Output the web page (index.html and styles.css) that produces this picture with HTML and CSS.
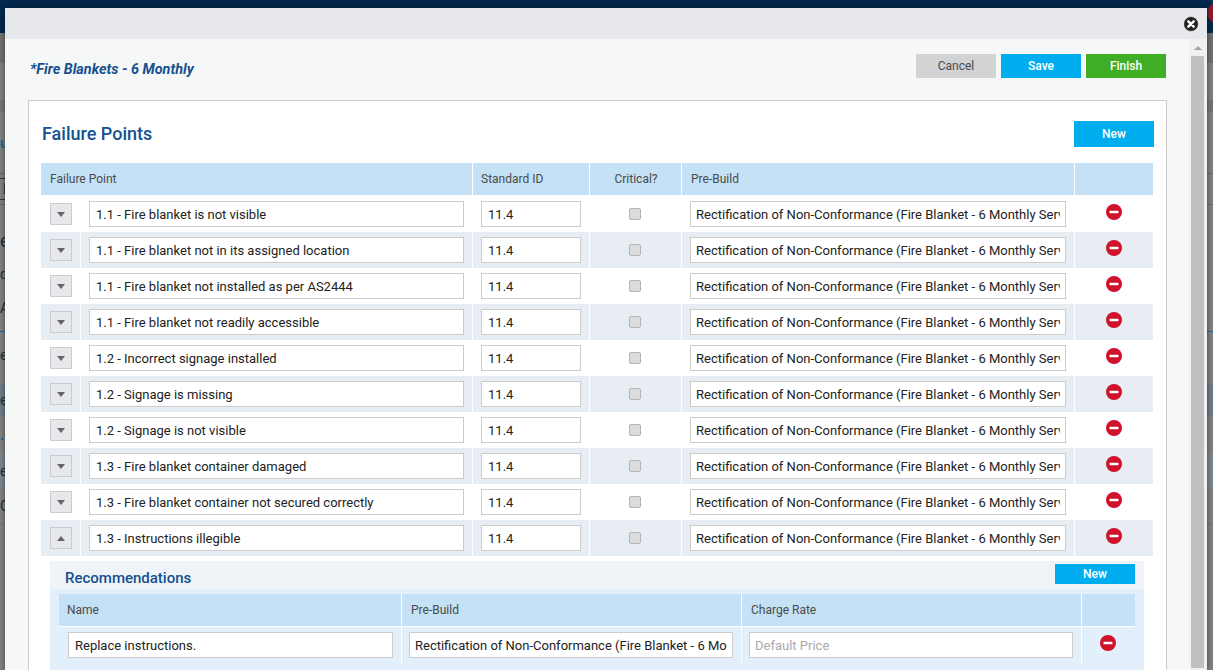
FILE: index.html
```html
<!DOCTYPE html>
<html lang="en">
<head>
    <meta charset="UTF-8">
    <meta name="viewport" content="width=device-width, initial-scale=1.0">
    <title>Fire Blankets - 6 Monthly</title>
    <link rel="stylesheet" href="styles.css">
</head>
<body>
    <!-- page behind the dialog, dimmed -->
    <div class="backdrop">
        <div class="nav"><span class="avatar"></span></div>
        <div class="band band-a"></div>
        <div class="band band-b"></div>
        <div class="band band-c"></div>
        <div class="band band-d"><span class="link">u</span></div>
        <div class="band band-e"><span class="boxed">D</span></div>
        <div class="band band-f">e</div>
        <div class="band band-g">di</div>
        <div class="band band-h">A</div>
        <div class="band band-i">e</div>
        <div class="band band-j">e</div>
        <div class="band band-k"><span class="link">.</span></div>
        <div class="band band-l">e</div>
        <div class="band band-m">Q</div>
        <div class="band band-n"></div>
    </div>

    <div class="modal">
        <div class="modal-head">
            <svg class="close-icon" viewBox="0 0 16 16" width="16" height="16">
                <circle cx="8" cy="8" r="7.4" fill="#222" stroke="#fff" stroke-width="0.6"/>
                <path d="M5.3 5.3l5.4 5.4M10.7 5.3l-5.4 5.4" stroke="#fff" stroke-width="2.4" stroke-linecap="round"/>
            </svg>
        </div>
        <div class="modal-body">
            <div class="content">
                <div class="title-row">
                    <div class="form-title">*Fire Blankets - 6 Monthly</div>
                    <div class="actions">
                        <button class="btn btn-grey">Cancel</button>
                        <button class="btn btn-blue">Save</button>
                        <button class="btn btn-green">Finish</button>
                    </div>
                </div>

                <div class="card">
                    <div class="card-head">
                        <h2>Failure Points</h2>
                        <button class="btn btn-blue btn-new">New</button>
                    </div>
                    <table class="grid">
                        <colgroup>
                            <col class="c-toggle"><col class="c-name"><col class="c-std"><col class="c-crit"><col class="c-pre"><col class="c-del">
                        </colgroup>
                        <thead>
                            <tr>
                                <th colspan="2">Failure Point</th>
                                <th class="std">Standard ID</th>
                                <th class="center">Critical?</th>
                                <th>Pre-Build</th>
                                <th></th>
                            </tr>
                        </thead>
                        <tbody>
                            <tr>
                                <td><span class="toggle"><i class="down"></i></span></td>
                                <td><input class="field" type="text" value="1.1 - Fire blanket is not visible"></td>
                                <td><input class="field" type="text" value="11.4"></td>
                                <td><input class="check" type="checkbox"></td>
                                <td><input class="field field-pre" type="text" value="Rectification of Non-Conformance (Fire Blanket - 6 Monthly Service)"></td>
                                <td><svg class="remove" viewBox="0 0 16 16" width="16" height="16"><circle cx="8" cy="8" r="8" fill="#d0122d"/><rect x="3.5" y="6.8" width="9" height="2.4" rx="0.6" fill="#fff"/></svg></td>
                            </tr>
                            <tr class="alt">
                                <td><span class="toggle"><i class="down"></i></span></td>
                                <td><input class="field" type="text" value="1.1 - Fire blanket not in its assigned location"></td>
                                <td><input class="field" type="text" value="11.4"></td>
                                <td><input class="check" type="checkbox"></td>
                                <td><input class="field field-pre" type="text" value="Rectification of Non-Conformance (Fire Blanket - 6 Monthly Service)"></td>
                                <td><svg class="remove" viewBox="0 0 16 16" width="16" height="16"><circle cx="8" cy="8" r="8" fill="#d0122d"/><rect x="3.5" y="6.8" width="9" height="2.4" rx="0.6" fill="#fff"/></svg></td>
                            </tr>
                            <tr>
                                <td><span class="toggle"><i class="down"></i></span></td>
                                <td><input class="field" type="text" value="1.1 - Fire blanket not installed as per AS2444"></td>
                                <td><input class="field" type="text" value="11.4"></td>
                                <td><input class="check" type="checkbox"></td>
                                <td><input class="field field-pre" type="text" value="Rectification of Non-Conformance (Fire Blanket - 6 Monthly Service)"></td>
                                <td><svg class="remove" viewBox="0 0 16 16" width="16" height="16"><circle cx="8" cy="8" r="8" fill="#d0122d"/><rect x="3.5" y="6.8" width="9" height="2.4" rx="0.6" fill="#fff"/></svg></td>
                            </tr>
                            <tr class="alt">
                                <td><span class="toggle"><i class="down"></i></span></td>
                                <td><input class="field" type="text" value="1.1 - Fire blanket not readily accessible"></td>
                                <td><input class="field" type="text" value="11.4"></td>
                                <td><input class="check" type="checkbox"></td>
                                <td><input class="field field-pre" type="text" value="Rectification of Non-Conformance (Fire Blanket - 6 Monthly Service)"></td>
                                <td><svg class="remove" viewBox="0 0 16 16" width="16" height="16"><circle cx="8" cy="8" r="8" fill="#d0122d"/><rect x="3.5" y="6.8" width="9" height="2.4" rx="0.6" fill="#fff"/></svg></td>
                            </tr>
                            <tr>
                                <td><span class="toggle"><i class="down"></i></span></td>
                                <td><input class="field" type="text" value="1.2 - Incorrect signage installed"></td>
                                <td><input class="field" type="text" value="11.4"></td>
                                <td><input class="check" type="checkbox"></td>
                                <td><input class="field field-pre" type="text" value="Rectification of Non-Conformance (Fire Blanket - 6 Monthly Service)"></td>
                                <td><svg class="remove" viewBox="0 0 16 16" width="16" height="16"><circle cx="8" cy="8" r="8" fill="#d0122d"/><rect x="3.5" y="6.8" width="9" height="2.4" rx="0.6" fill="#fff"/></svg></td>
                            </tr>
                            <tr class="alt">
                                <td><span class="toggle"><i class="down"></i></span></td>
                                <td><input class="field" type="text" value="1.2 - Signage is missing"></td>
                                <td><input class="field" type="text" value="11.4"></td>
                                <td><input class="check" type="checkbox"></td>
                                <td><input class="field field-pre" type="text" value="Rectification of Non-Conformance (Fire Blanket - 6 Monthly Service)"></td>
                                <td><svg class="remove" viewBox="0 0 16 16" width="16" height="16"><circle cx="8" cy="8" r="8" fill="#d0122d"/><rect x="3.5" y="6.8" width="9" height="2.4" rx="0.6" fill="#fff"/></svg></td>
                            </tr>
                            <tr>
                                <td><span class="toggle"><i class="down"></i></span></td>
                                <td><input class="field" type="text" value="1.2 - Signage is not visible"></td>
                                <td><input class="field" type="text" value="11.4"></td>
                                <td><input class="check" type="checkbox"></td>
                                <td><input class="field field-pre" type="text" value="Rectification of Non-Conformance (Fire Blanket - 6 Monthly Service)"></td>
                                <td><svg class="remove" viewBox="0 0 16 16" width="16" height="16"><circle cx="8" cy="8" r="8" fill="#d0122d"/><rect x="3.5" y="6.8" width="9" height="2.4" rx="0.6" fill="#fff"/></svg></td>
                            </tr>
                            <tr class="alt">
                                <td><span class="toggle"><i class="down"></i></span></td>
                                <td><input class="field" type="text" value="1.3 - Fire blanket container damaged"></td>
                                <td><input class="field" type="text" value="11.4"></td>
                                <td><input class="check" type="checkbox"></td>
                                <td><input class="field field-pre" type="text" value="Rectification of Non-Conformance (Fire Blanket - 6 Monthly Service)"></td>
                                <td><svg class="remove" viewBox="0 0 16 16" width="16" height="16"><circle cx="8" cy="8" r="8" fill="#d0122d"/><rect x="3.5" y="6.8" width="9" height="2.4" rx="0.6" fill="#fff"/></svg></td>
                            </tr>
                            <tr>
                                <td><span class="toggle"><i class="down"></i></span></td>
                                <td><input class="field" type="text" value="1.3 - Fire blanket container not secured correctly"></td>
                                <td><input class="field" type="text" value="11.4"></td>
                                <td><input class="check" type="checkbox"></td>
                                <td><input class="field field-pre" type="text" value="Rectification of Non-Conformance (Fire Blanket - 6 Monthly Service)"></td>
                                <td><svg class="remove" viewBox="0 0 16 16" width="16" height="16"><circle cx="8" cy="8" r="8" fill="#d0122d"/><rect x="3.5" y="6.8" width="9" height="2.4" rx="0.6" fill="#fff"/></svg></td>
                            </tr>
                            <tr class="alt">
                                <td><span class="toggle"><i class="up"></i></span></td>
                                <td><input class="field" type="text" value="1.3 - Instructions illegible"></td>
                                <td><input class="field" type="text" value="11.4"></td>
                                <td><input class="check" type="checkbox"></td>
                                <td><input class="field field-pre" type="text" value="Rectification of Non-Conformance (Fire Blanket - 6 Monthly Service)"></td>
                                <td><svg class="remove" viewBox="0 0 16 16" width="16" height="16"><circle cx="8" cy="8" r="8" fill="#d0122d"/><rect x="3.5" y="6.8" width="9" height="2.4" rx="0.6" fill="#fff"/></svg></td>
                            </tr>
                            <tr class="detail">
                                <td colspan="6">
                                    <div class="panel">
                                        <div class="panel-head">
                                            <h3>Recommendations</h3>
                                            <button class="btn btn-blue btn-small">New</button>
                                        </div>
                                        <div class="panel-body">
                                            <table class="grid inner">
                                                <colgroup>
                                                    <col class="r-name"><col class="r-pre"><col class="r-rate"><col class="r-del">
                                                </colgroup>
                                                <thead>
                                                    <tr>
                                                        <th>Name</th>
                                                        <th>Pre-Build</th>
                                                        <th>Charge Rate</th>
                                                        <th></th>
                                                    </tr>
                                                </thead>
                                                <tbody>
                                                    <tr>
                                                        <td><input class="field" type="text" value="Replace instructions."></td>
                                                        <td><input class="field field-pre" type="text" value="Rectification of Non-Conformance (Fire Blanket - 6 Monthly Service)"></td>
                                                        <td><input class="field field-pre" type="text" placeholder="Default Price"></td>
                                                        <td><svg class="remove" viewBox="0 0 16 16" width="16" height="16"><circle cx="8" cy="8" r="8" fill="#d0122d"/><rect x="3.5" y="6.8" width="9" height="2.4" rx="0.6" fill="#fff"/></svg></td>
                                                    </tr>
                                                </tbody>
                                            </table>
                                        </div>
                                    </div>
                                </td>
                            </tr>
                        </tbody>
                    </table>
                </div>
            </div>
            <div class="scrollbar">
                <i class="scroll-up"></i>
                <div class="scroll-thumb"></div>
            </div>
        </div>
    </div>
</body>
</html>
```
FILE: styles.css
```css
* {
    box-sizing: border-box;
}
html, body {
    height: 670px;
    overflow: hidden;
}
body {
    margin: 0;
    font-family: Roboto, "Liberation Sans", sans-serif;
    background-color: #7f7f7f;
}

/* page behind the dialog */
.backdrop {
    display: flex;
    flex-direction: column;
    font-size: 14px;
    color: #1c2c40;
}
.nav {
    position: relative;
    height: 33px;
    background-color: #02294d;
    overflow: hidden;
}
.avatar {
    position: absolute;
    top: 3px;
    right: -14px;
    width: 20px;
    height: 20px;
    border-radius: 50%;
    background-color: #8a1c2c;
}
.band {
    display: flex;
    align-items: center;
    overflow: hidden;
}
.band-a { height: 30px; background-color: #6f6f6f; }
.band-b { height: 37px; }
.band-c { height: 12px; background-color: #737373; }
.band-d { height: 62px; border-bottom: 1px solid #666; }
.band-e { height: 31px; border-bottom: 1px solid #666; }
.band-f { height: 50px; font-size: 18px; padding-top: 20px; }
.band-g { height: 34px; padding-top: 4px; }
.band-h { height: 43px; padding-bottom: 4px; border-bottom: 1px solid #0d6d99; }
.band-i { height: 52px; padding-bottom: 6px; }
.band-j { height: 32px; background-color: #6a7a88; }
.band-k { height: 37px; }
.band-l { height: 35px; background-color: #7a8590; }
.band-m { height: 37px; border-bottom: 1px solid #707070; }
.band-n { height: 145px; }
.link {
    color: #0d6d99;
    font-weight: 700;
}
.boxed {
    border: 1px solid #333;
    padding: 2px 1px 2px 4px;
    margin-left: -2px;
}

/* dialog */
.modal {
    position: absolute;
    top: 8px;
    left: 5px;
    width: 1202px;
    height: 662px;
    background-color: #f6f8f8;
    box-shadow: 0 0 5px rgba(0, 0, 0, 0.45);
}
.modal-head {
    position: relative;
    height: 31px;
    background-color: #e6e8ec;
}
.close-icon {
    position: absolute;
    top: 8px;
    right: 8px;
}
.modal-body {
    display: flex;
    height: 631px;
    overflow: hidden;
}
.content {
    flex: 1;
    padding: 15px 22px 0 23px;
    overflow: hidden;
}
.scrollbar {
    display: flex;
    flex-direction: column;
    align-items: center;
    width: 18px;
    padding-right: 1px;
    background-color: #f1f1f1;
}
.scroll-up {
    margin-top: 7px;
    border-left: 4px solid transparent;
    border-right: 4px solid transparent;
    border-bottom: 4px solid #a3a3a3;
}
.scroll-thumb {
    width: 13px;
    height: 612px;
    margin-top: 6px;
    background-color: #c0c0c0;
}
.title-row {
    display: flex;
    justify-content: space-between;
    margin-bottom: 22px;
}
.form-title {
    margin: 7px 0 0 2px;
    font-size: 14.4px;
    font-weight: 700;
    font-style: italic;
    color: #15508f;
}
.actions {
    display: flex;
    gap: 5px;
    margin-right: 1px;
}
.btn {
    width: 80px;
    height: 24px;
    padding: 0;
    border: none;
    font-family: Roboto, "Liberation Sans", sans-serif;
    font-size: 12px;
    font-weight: 500;
    color: #fff;
    cursor: pointer;
}
.btn-grey {
    background-color: #d1d3d5;
    color: #4a4a4a;
    font-weight: 400;
}
.btn-blue {
    background-color: #00aeef;
}
.btn-green {
    background-color: #3fae24;
}
.btn-new {
    height: 26px;
}
.btn-small {
    height: 20px;
}

/* failure points card */
.card {
    width: 1139px;
    padding: 20px 12px 12px;
    background: #fff;
    border: 1px solid #ccc;
}
.card-head {
    display: flex;
    justify-content: space-between;
    margin-bottom: 16px;
}
.card-head h2 {
    margin: 0 0 0 1px;
    font-size: 18px;
    line-height: 25px;
    font-weight: 500;
    color: #15508f;
}

/* tables */
.grid {
    width: 1112px;
    table-layout: fixed;
    border-collapse: separate;
    border-spacing: 0;
}
.c-toggle { width: 39px; }
.c-name { width: 392px; }
.c-std { width: 117px; }
.c-crit { width: 92px; }
.c-pre { width: 393px; }
.c-del { width: 79px; }
.grid th {
    height: 33px;
    padding: 0 8px 1px 9px;
    background-color: #c5e1f5;
    border-left: 1px solid #fff;
    border-bottom: 1px solid #fff;
    font-size: 12px;
    font-weight: 400;
    text-align: left;
    color: #4a4a4a;
}
.grid th:first-child {
    border-left: none;
}
.grid th.std {
    padding-left: 8px;
}
.grid td {
    height: 36px;
    padding: 5px 8px;
    border-left: 1px solid #fff;
    vertical-align: top;
}
.grid td:first-child {
    border-left: none;
}
.grid .center {
    text-align: center;
}
.grid tr.alt td {
    background-color: #e8edf4;
}
.field {
    display: block;
    width: 100%;
    height: 26px;
    padding: 0 6px;
    background: #fff;
    border: 1px solid #ccc;
    font-family: Roboto, "Liberation Sans", sans-serif;
    font-size: 13px;
    color: #222;
    outline: none;
}
.field-pre {
    padding: 0 5px;
}
.field::placeholder {
    color: #aaa;
}
.toggle {
    display: flex;
    align-items: center;
    justify-content: center;
    width: 22px;
    height: 22px;
    margin: 2px 0 0 1px;
    background-color: #e6e8ec;
    border: 1px solid #ccc;
}
.down {
    border-left: 4px solid transparent;
    border-right: 4px solid transparent;
    border-top: 5px solid #666;
}
.up {
    border-left: 4px solid transparent;
    border-right: 4px solid transparent;
    border-bottom: 5px solid #666;
}
.check {
    appearance: none;
    display: block;
    width: 12px;
    height: 12px;
    margin: 7px 0 0 31px;
    background-color: #dcdcdc;
    border: 1px solid #b4b4b4;
    border-radius: 2px;
}
.remove {
    display: block;
    margin: 3px auto 0;
}

/* recommendations */
.detail > td {
    padding: 5px 9px 0;
    border-left: none;
}
.panel {
    background-color: #e3effb;
}
.panel-head {
    display: flex;
    justify-content: space-between;
    align-items: center;
    height: 28px;
    padding: 0 9px 2px 15px;
    background-color: #f0f4f8;
}
.panel-head h3 {
    margin: 8px 0 0;
    font-size: 15px;
    font-weight: 500;
    color: #15508f;
}
.panel-body {
    padding: 5px 9px 6px;
}
.inner {
    width: 1076px;
}
.r-name { width: 342px; }
.r-pre { width: 340px; }
.r-rate { width: 340px; }
.r-del { width: 54px; }
.grid.inner th:first-child {
    padding-left: 8px;
}
.inner td {
    padding: 5px 8px 5px 7px;
    height: 37px;
}
.inner td:first-child {
    padding-left: 9px;
}
.inner .remove {
    margin-top: 3px;
}
```
